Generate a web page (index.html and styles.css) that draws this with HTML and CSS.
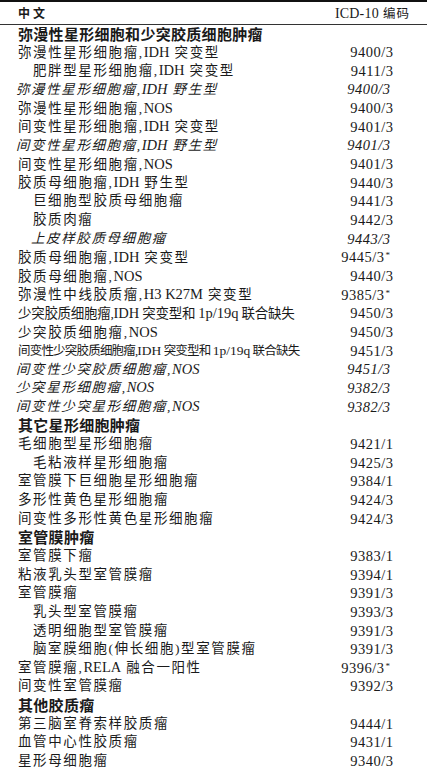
FILE: index.html
```html
<!DOCTYPE html>
<html lang="zh-CN">
<head>
<meta charset="utf-8">
<title>ICD-10 编码</title>
<link rel="stylesheet" href="styles.css">
</head>
<body>
<div class="table">
  <div class="head">
    <span class="head-name">中文</span>
    <span class="head-code"><span class="lat">ICD-10</span> 编码</span>
  </div>
  <div class="row section"><span class="name">弥漫性星形细胞和少突胶质细胞肿瘤</span></div>
  <div class="row"><span class="name">弥漫性星形细胞瘤,<span class="lat">IDH</span> 突变型</span><span class="code">9400/3</span></div>
  <div class="row sub"><span class="name">肥胖型星形细胞瘤,<span class="lat">IDH</span> 突变型</span><span class="code">9411/3</span></div>
  <div class="row it"><span class="name">弥漫性星形细胞瘤,<span class="lat">IDH</span> 野生型</span><span class="code">9400/3</span></div>
  <div class="row"><span class="name">弥漫性星形细胞瘤,<span class="lat">NOS</span></span><span class="code">9400/3</span></div>
  <div class="row"><span class="name">间变性星形细胞瘤,<span class="lat">IDH</span> 突变型</span><span class="code">9401/3</span></div>
  <div class="row it"><span class="name">间变性星形细胞瘤,<span class="lat">IDH</span> 野生型</span><span class="code">9401/3</span></div>
  <div class="row"><span class="name">间变性星形细胞瘤,<span class="lat">NOS</span></span><span class="code">9401/3</span></div>
  <div class="row"><span class="name">胶质母细胞瘤,<span class="lat">IDH</span> 野生型</span><span class="code">9440/3</span></div>
  <div class="row sub"><span class="name">巨细胞型胶质母细胞瘤</span><span class="code">9441/3</span></div>
  <div class="row sub"><span class="name">胶质肉瘤</span><span class="code">9442/3</span></div>
  <div class="row sub it"><span class="name">上皮样胶质母细胞瘤</span><span class="code">9443/3</span></div>
  <div class="row star"><span class="name">胶质母细胞瘤,<span class="lat">IDH</span> 突变型</span><span class="code">9445/3<sup>*</sup></span></div>
  <div class="row"><span class="name">胶质母细胞瘤,<span class="lat">NOS</span></span><span class="code">9440/3</span></div>
  <div class="row star"><span class="name">弥漫性中线胶质瘤,<span class="lat">H3 K27M</span> 突变型</span><span class="code">9385/3<sup>*</sup></span></div>
  <div class="row"><span class="name tight">少突胶质细胞瘤,<span class="lat">IDH</span> 突变型和 <span class="lat">1p/19q</span> 联合缺失</span><span class="code">9450/3</span></div>
  <div class="row"><span class="name">少突胶质细胞瘤,<span class="lat">NOS</span></span><span class="code">9450/3</span></div>
  <div class="row"><span class="name tighter">间变性少突胶质细胞瘤,<span class="lat">IDH</span> 突变型和 <span class="lat">1p/19q</span> 联合缺失</span><span class="code">9451/3</span></div>
  <div class="row it"><span class="name">间变性少突胶质细胞瘤,<span class="lat">NOS</span></span><span class="code">9451/3</span></div>
  <div class="row it"><span class="name">少突星形细胞瘤,<span class="lat">NOS</span></span><span class="code">9382/3</span></div>
  <div class="row it"><span class="name">间变性少突星形细胞瘤,<span class="lat">NOS</span></span><span class="code">9382/3</span></div>
  <div class="row section"><span class="name">其它星形细胞肿瘤</span></div>
  <div class="row"><span class="name">毛细胞型星形细胞瘤</span><span class="code">9421/1</span></div>
  <div class="row sub"><span class="name">毛粘液样星形细胞瘤</span><span class="code">9425/3</span></div>
  <div class="row"><span class="name">室管膜下巨细胞星形细胞瘤</span><span class="code">9384/1</span></div>
  <div class="row"><span class="name">多形性黄色星形细胞瘤</span><span class="code">9424/3</span></div>
  <div class="row"><span class="name">间变性多形性黄色星形细胞瘤</span><span class="code">9424/3</span></div>
  <div class="row section"><span class="name">室管膜肿瘤</span></div>
  <div class="row"><span class="name">室管膜下瘤</span><span class="code">9383/1</span></div>
  <div class="row"><span class="name">粘液乳头型室管膜瘤</span><span class="code">9394/1</span></div>
  <div class="row"><span class="name">室管膜瘤</span><span class="code">9391/3</span></div>
  <div class="row sub"><span class="name">乳头型室管膜瘤</span><span class="code">9393/3</span></div>
  <div class="row sub"><span class="name">透明细胞型室管膜瘤</span><span class="code">9391/3</span></div>
  <div class="row sub"><span class="name">脑室膜细胞(伸长细胞)型室管膜瘤</span><span class="code">9391/3</span></div>
  <div class="row star"><span class="name">室管膜瘤,<span class="lat">RELA</span> 融合一阳性</span><span class="code">9396/3<sup>*</sup></span></div>
  <div class="row"><span class="name">间变性室管膜瘤</span><span class="code">9392/3</span></div>
  <div class="row section"><span class="name">其他胶质瘤</span></div>
  <div class="row"><span class="name">第三脑室脊索样胶质瘤</span><span class="code">9444/1</span></div>
  <div class="row"><span class="name">血管中心性胶质瘤</span><span class="code">9431/1</span></div>
  <div class="row"><span class="name">星形母细胞瘤</span><span class="code">9340/3</span></div>
</div>
</body>
</html>
```

FILE: styles.css
```css
html, body {
  margin: 0;
  padding: 0;
  background: #ffffff;
}

body {
  color: #1a1a1a;
  font-family: "Liberation Serif", "Noto Sans CJK SC", serif;
}

.table {
  width: 427px;
  display: flex;
  flex-direction: column;
}

.head {
  display: flex;
  justify-content: space-between;
  align-items: center;
  height: 21.5px;
  border-top: 2px solid #111;
  border-bottom: 1px solid #333;
  padding: 0 17px 0 18px;
  flex-shrink: 0;
}

.head-name {
  font-size: 12px;
  font-weight: 700;
  letter-spacing: 3px;
}

.head-code {
  font-size: 12.5px;
  letter-spacing: 1px;
}

.head-code .lat {
  font-size: 14px;
  letter-spacing: 0.2px;
}

.row {
  display: flex;
  justify-content: space-between;
  align-items: center;
  height: 18.67px;
  line-height: 18.67px;
  padding: 0 33.5px 0 18px;
  white-space: nowrap;
  overflow: visible;
  flex-shrink: 0;
}

.name {
  font-size: 13.5px;
  letter-spacing: 1.6px;
}

.lat {
  font-size: 14.5px;
  letter-spacing: 0;
}

.code {
  font-size: 14.5px;
  letter-spacing: 0.5px;
}

.section .name {
  font-size: 15px;
  font-weight: 700;
  letter-spacing: 0.3px;
  font-family: "Noto Sans CJK SC", sans-serif;
}

.sub {
  padding-left: 33px;
}

.it {
  font-style: italic;
  padding-left: 16px;
  padding-right: 36.5px;
}

.sub.it {
  padding-left: 31px;
}

.star {
  padding-right: 36.5px;
}

.code sup {
  font-size: 9px;
  line-height: 0;
  vertical-align: 4px;
  margin-left: 1px;
}

.tight {
  letter-spacing: -0.3px;
}

.tighter {
  font-size: 12.5px;
  letter-spacing: -0.8px;
}

.tighter .lat {
  font-size: 13.5px;
}
```
